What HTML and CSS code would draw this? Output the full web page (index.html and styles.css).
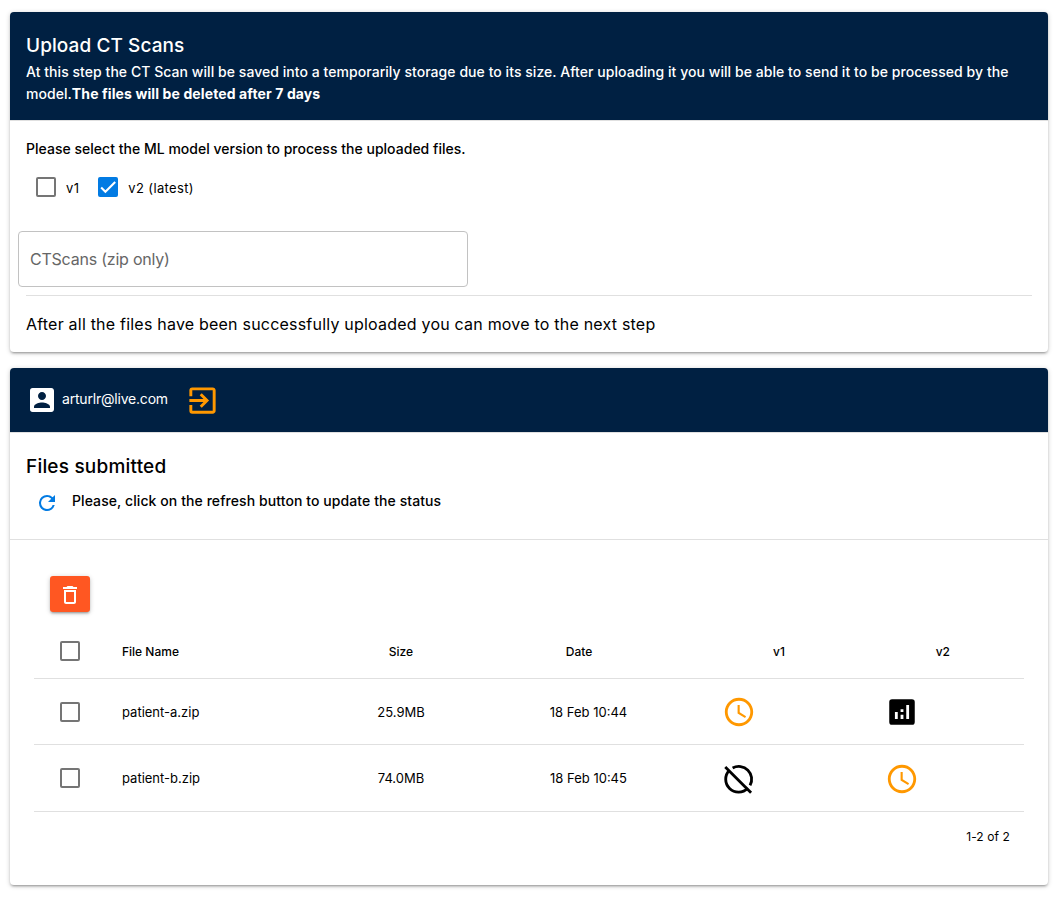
FILE: index.html
```html
<!DOCTYPE html>
<html lang="en">
<head>
<meta charset="utf-8">
<title>Upload CT Scans</title>
<link rel="stylesheet" href="styles.css">
</head>
<body>
<main class="page">
  <section class="card upload">
    <header class="banner">
      <h1 class="title banner-title">Upload CT Scans</h1>
      <p class="subtitle banner-text">At this step the CT Scan will be saved into a temporarily storage due to its size. After uploading it you will be able to send it to be processed by the<br>model.<strong>The files will be deleted after 7 days</strong></p>
    </header>
    <div class="upload-body">
      <p class="subtitle prompt">Please select the ML model version to process the uploaded files.</p>
      <div class="versions">
        <label class="version"><span class="box"></span><span class="version-label">v1</span></label>
        <label class="version"><span class="box checked"><svg viewBox="0 0 24 24"><path d="M1.73 12.91 8.1 19.28 22.79 4.59" fill="none" stroke="#fff" stroke-width="3.12"/></svg></span><span class="version-label">v2 (latest)</span></label>
      </div>
      <div class="file-field"><span>CTScans (zip only)</span></div>
      <p class="next-step"><span>After all the files have been successfully uploaded you can move to the next step</span></p>
    </div>
  </section>

  <section class="card files">
    <header class="userbar">
      <svg class="account" viewBox="0 0 24 24"><path d="M3 5v14a2 2 0 0 0 2 2h14c1.1 0 2-.9 2-2V5c0-1.1-.9-2-2-2H5a2 2 0 0 0-2 2zm12 4c0 1.66-1.34 3-3 3s-3-1.34-3-3 1.340-3 3-3 3 1.340 3 3zm-9 8c0-2 4-3.100 6-3.100s6 1.100 6 3.100v1H6v-1z"/></svg>
      <span class="email">arturlr@live.com</span>
      <svg class="exit" viewBox="0 0 24 24"><path d="M10.090 15.590 11.500 17l5-5-5-5-1.410 1.410L12.670 11H3v2h9.670l-2.580 2.590zM19 3H5a2 2 0 0 0-2 2v4h2V5h14v14H5v-4H3v4a2 2 0 0 0 2 2h14c1.100 0 2-.9 2-2V5c0-1.100-.9-2-2-2z"/></svg>
    </header>
    <div class="files-head">
      <h2 class="title files-title">Files submitted</h2>
      <div class="refresh-row">
        <svg class="refresh" viewBox="0 0 24 24"><path d="M17.650 6.350A7.958 7.958 0 0 0 12 4a8 8 0 1 0 7.730 10h-2.080A5.990 5.990 0 0 1 12 18a6 6 0 1 1 0-12c1.660 0 3.140.69 4.220 1.780L13 11h7V4l-2.350 2.350z"/></svg>
        <p class="subtitle refresh-text">Please, click on the refresh button to update the status</p>
      </div>
    </div>
    <div class="table-wrap">
      <button class="delete" aria-label="Delete"><svg viewBox="0 0 24 24"><path d="M6 19c0 1.100.9 2 2 2h8c1.100 0 2-.9 2-2V7H6v12zM8 9h8v10H8V9zm7.500-5-1-1h-5l-1 1H5v2h14V4h-3.500z"/></svg></button>
      <table class="table">
        <colgroup><col class="c-check"><col class="c-name"><col class="c-size"><col class="c-date"><col class="c-v1"><col class="c-v2"><col class="c-end"></colgroup>
        <thead>
          <tr><th class="check"><span class="box"></span></th><th class="name">File Name</th><th class="size">Size</th><th class="date">Date</th><th class="ver1">v1</th><th class="ver2">v2</th><th></th></tr>
        </thead>
        <tbody>
          <tr class="first">
            <td><span class="box"></span></td><td class="name text">patient-a.zip</td><td class="size text">25.9MB</td><td class="text">18 Feb 10:44</td>
            <td><svg class="status pending" viewBox="0 0 24 24"><path d="M11.990 2C6.470 2 2 6.480 2 12s4.470 10 9.990 10C17.520 22 22 17.520 22 12S17.520 2 11.990 2zM12 20a8 8 0 1 1 0-16 8 8 0 0 1 0 16zM12.500 7H11v6l5.250 3.150.75-1.230-4.500-2.670z"/></svg></td>
            <td><svg class="status" viewBox="0 0 24 24"><path d="M19 3H5a2 2 0 0 0-2 2v14a2 2 0 0 0 2 2h14a2 2 0 0 0 2-2V5a2 2 0 0 0-2-2zM9 17H7v-5h2v5zm4 0h-2v-3h2v3zm0-5h-2v-2h2v2zm4 5h-2V7h2v10z"/></svg></td><td></td>
          </tr>
          <tr class="last">
            <td class="check"><span class="box"></span></td><td class="name">patient-b.zip</td><td class="size">74.0MB</td><td>18 Feb 10:45</td>
            <td><svg class="status" viewBox="0 0 24 24"><g fill="none" stroke="#000" stroke-width="2"><path d="M7.500 4.300A9 9 0 0 1 19.800 16.500M5.200 5.800A9 9 0 0 0 18.200 18.500"/><path d="M2.300 3.500 20.500 21.700"/></g></svg></td>
            <td><svg class="status pending" viewBox="0 0 24 24"><path d="M11.990 2C6.470 2 2 6.480 2 12s4.470 10 9.990 10C17.520 22 22 17.520 22 12S17.520 2 11.990 2zM12 20a8 8 0 1 1 0-16 8 8 0 0 1 0 16zM12.500 7H11v6l5.250 3.150.75-1.230-4.500-2.670z"/></svg></td><td></td>
          </tr>
        </tbody>
      </table>
      <div class="pagination">1-2 of 2</div>
    </div>
  </section>
</main>
</body>
</html>
```

FILE: styles.css
```css
* { box-sizing: border-box; }
body { margin: 0; background: #fff; color: #000; font-family: Inter, Roboto, sans-serif; font-size: 14px; line-height: 21px; }
h1, h2, p { margin: 0; }
svg { display: block; fill: currentColor; flex: none; }
.page { display: flex; flex-direction: column; gap: 16px; padding: 12px 16px 16px 10px; }
.card { border-radius: 4px; background: #fff; box-shadow: 0 1px 5px rgba(0,0,0,.2), 0 2px 2px rgba(0,0,0,.14), 0 3px 1px -2px rgba(0,0,0,.12); }
.upload { height: 340px; }
.files { height: 517px; }
.title { padding-top: 1px; height: 32px; font-size: 19px; font-weight: 500; line-height: 32px; letter-spacing: .08px; }
.files-title { letter-spacing: .2px; }
.subtitle { font-size: 14px; font-weight: 500; line-height: 22px; letter-spacing: .02px; white-space: nowrap; }
.banner { height: 108px; padding: 17px 16px 15px; border-radius: 4px 4px 0 0; background: #002042; color: #fff; }
.banner-text { font-weight: 450; letter-spacing: .052px; }
.banner-text strong { font-weight: 700; letter-spacing: .11px; }
.upload-body { border-top: 1px solid #e0e0e0; padding: 17px 16px 0; }
.versions { display: flex; gap: 19px; height: 38px; padding: 17px 10px 0; }
.version { display: flex; align-items: center; gap: 10px; height: 20px; font-size: 13px; letter-spacing: .36px; }
.version-label { padding-top: 2px; }
.box { display: inline-flex; flex: none; width: 20px; height: 20px; border: 2px solid #757575; border-radius: 2px; vertical-align: middle; }
.box.checked { border-color: #027be3; background: #027be3; }
.file-field { display: flex; align-items: center; width: 450px; height: 56px; margin: 33px 0 8px -8px; padding: 0 11px; border: 1px solid #c2c2c2; border-radius: 4px; color: #666; font-size: 16px; letter-spacing: -.22px; }
.next-step { padding-top: 16px; border-top: 1px solid #e0e0e0; font-size: 16px; line-height: 24px; letter-spacing: .21px; }
.userbar { display: flex; align-items: center; height: 64px; padding: 0 16px; border-radius: 4px 4px 0 0; background: #002042; color: #fff; }
.account { width: 32px; height: 32px; }
.email { margin: -3px 0 0 4px; width: 123px; letter-spacing: -.2px; }
.exit { width: 35px; height: 35px; margin-top: 1px; color: #ff9800; }
.files-head { height: 108px; padding: 17px 16px 0; border-top: 1px solid #e0e0e0; border-bottom: 1px solid #e0e0e0; }
.refresh-row { display: flex; align-items: flex-start; padding: 8px 0 0 9px; gap: 13px; }
.refresh { width: 24px; height: 24px; margin-top: 1px; color: #027be3; }
.refresh-text { letter-spacing: .08px; }
.table-wrap { padding: 36px 24px 0; }
.delete { display: flex; align-items: center; justify-content: center; width: 40px; height: 36px; margin-left: 16px; padding: 2px 0 0; border: 0; border-radius: 3px; background: #ff5722; color: #fff; box-shadow: 0 1px 5px rgba(0,0,0,.2), 0 2px 2px rgba(0,0,0,.14), 0 3px 1px -2px rgba(0,0,0,.12); }
.delete svg { width: 24px; height: 24px; }
.table { width: 990px; margin-top: 12px; border-collapse: separate; border-spacing: 0; table-layout: fixed; font-size: 13px; }
.c-check { width: 72px; }
.c-name { width: 175px; }
.c-size { width: 239px; }
.c-date { width: 137px; }
.c-v1 { width: 164px; }
.c-v2 { width: 162px; }
.c-end { width: 41px; }
.table th, .table td { height: 66px; padding: 0; border-bottom: 1px solid #e0e0e0; text-align: center; vertical-align: middle; }
.table th { height: 55px; font-size: 12px; font-weight: 500; }
.table .last td { height: 67px; }
.table .name { padding-left: 16px; text-align: left; }
.table .size { padding-left: 1px; }
.table .date { padding-right: 19px; }
.table .ver1 { padding-right: 36px; text-align: right; }
.table .ver2 { padding-right: 33px; text-align: right; }
.table .text { padding-top: 2px; }
.table .check { padding-bottom: 2px; }
.status { width: 34px; height: 34px; margin: 0 auto; }
.last .status { margin-top: 2px; }
.pending { color: #ff9800; }
.pagination { padding: 14px 14px 0 0; font-size: 12px; letter-spacing: .1px; text-align: right; }
```
